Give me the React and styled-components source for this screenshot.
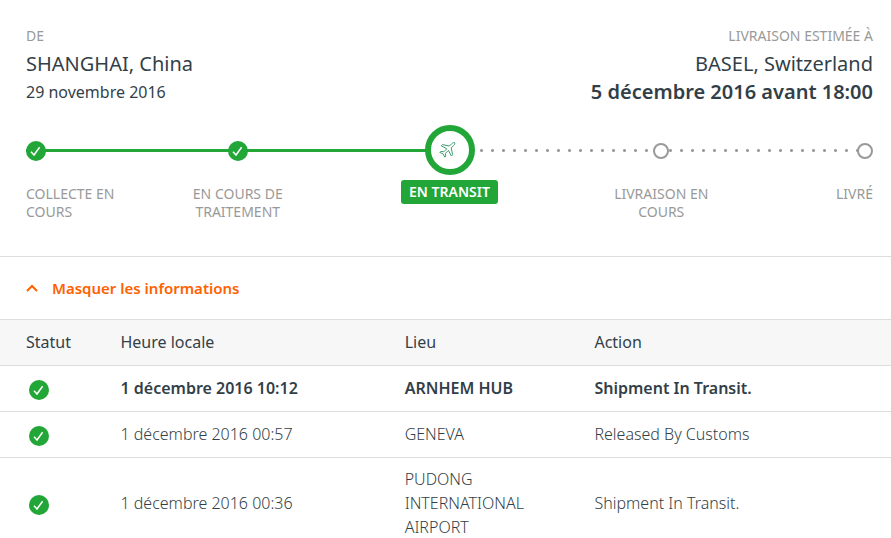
import React, { useState } from 'react'
import styled, { createGlobalStyle } from 'styled-components'

const GlobalStyle = createGlobalStyle`
* { box-sizing: border-box; }
body {
  margin: 0;
  background: #FFFFFF;
  color: #333F48;
  font-family: "Noto Sans", "Open Sans", sans-serif;
  font-size: 16px;
  line-height: 24px;
}
`;

const Summary = styled.section`
padding: 27px 18px 35px 26px;
border-bottom: 1px solid #DDDDDD;
`;

const Route = styled.div`
display: flex;
justify-content: space-between;
margin-bottom: 19px;
`;

const Place = styled.div`
text-align: ${(props) => (props.$right ? "right" : "left")};
`;

const Caption = styled.p`
margin: 0 0 5px;
font-size: 14px;
line-height: 18px;
color: #999999;
`;

const City = styled.p`
margin: 0;
font-size: 20px;
line-height: 28px;
`;

const DateLine = styled.p`
margin: 0;
font-size: ${(props) => (props.$strong ? "20px" : "16px")};
font-weight: ${(props) => (props.$strong ? 600 : 400)};
line-height: 28px;
`;

const Progress = styled.div`
display: grid;
`;

const Track = styled.div`
grid-area: 1 / 1;
display: flex;
padding-top: 24px;
`;

const Line = styled.span`
flex: 1;
height: 3px;
background: ${(props) => (props.$done
    ? "#21A637"
    : "radial-gradient(circle, #999999 1px, transparent 2px) 4px 0 / 11px 3px")};
`;

const Steps = styled.ol`
grid-area: 1 / 1;
display: grid;
grid-template-columns: 1fr 2fr 2fr 2fr 1fr;
margin: 0;
padding: 0;
list-style: none;
`;

const Step = styled.li`
display: flex;
flex-direction: column;
align-items: center;
text-align: center;
&:first-child { align-items: flex-start; text-align: left; }
&:last-child { align-items: flex-end; text-align: right; }
`;

const MarkerBox = styled.div`
display: flex;
align-items: ${(props) => (props.$current ? "flex-start" : "center")};
height: 52px;
`;

const Circle = styled.span`
display: flex;
align-items: center;
justify-content: center;
width: ${(props) => (props.$current ? "50px" : "16px")};
height: ${(props) => (props.$current ? "50px" : "16px")};
border: ${(props) => (props.$current ? "6px solid #21A637" : "2px solid #999999")};
border-radius: 50%;
background: #FFFFFF;
`;

const StepLabel = styled.span`
max-width: 106px;
margin-top: 8px;
font-size: 14px;
line-height: 18px;
color: #999999;
`;

const Badge = styled.strong`
margin-top: 3px;
padding: 3px 8px;
font-size: 14px;
line-height: 18px;
font-weight: 600;
color: #FFFFFF;
background: #21A637;
border-radius: 3px;
`;

const Toggle = styled.button`
display: flex;
align-items: center;
gap: 14px;
width: 100%;
height: 62px;
padding: 0 26px;
border: 0;
background: none;
font: inherit;
font-size: 15px;
font-weight: 600;
color: #FF6200;
cursor: pointer;
`;

const Table = styled.table`
width: 100%;
table-layout: fixed;
border-collapse: collapse;
`;

const Row = styled.tr`
border-top: 1px solid #DDDDDD;
font-weight: ${(props) => (props.$latest ? 600 : 300)};
background: ${(props) => (props.$head ? "#F7F7F7" : "#FFFFFF")};
`;

const HeadCell = styled.th`
width: ${(props) => props.$width};
height: 46px;
padding: 9px 0 10px 26px;
font-weight: 400;
text-align: left;
`;

const Cell = styled.td`
height: 46px;
padding: 9px 0 10px 26px;
`;

const StatusBox = styled.span`
display: flex;
padding: 3px 0 0 3px;
`;

function Check() {
  return (
    <svg width="20" height="20" viewBox="0 0 20 20" aria-hidden="true">
      <circle cx="10" cy="10" r="10" fill="#21A637" />
      <path d="M5 10.8 L8 14 L13.6 6.2" fill="none" stroke="#FFFFFF" strokeWidth="1.5" />
    </svg>
  )
}

function Plane() {
  return (
    <svg width="22" height="16" viewBox="0 0 22 16" fill="none" stroke="#3F9C70" strokeWidth="1" strokeLinejoin="round" aria-hidden="true">
      <path d="M15.8 0.8 C14.6 0.4 13.6 0.8 12.6 1.8 L10.4 4 L3.4 2.6 L2.2 3.8 L7.8 6.8 L4.8 9.8 L1.8 9.4 L0.8 10.4 L4.2 12 L5.8 15.2 L6.8 14.2 L6.4 11.4 L9.4 8.4 L12.4 14 L13.6 12.8 L12.2 5.8 L14.6 3.6 C15.4 2.7 16 1.8 15.8 0.8 Z" />
    </svg>
  )
}

const steps = [
  { label: "COLLECTE EN COURS", state: "done" },
  { label: "EN COURS DE TRAITEMENT", state: "done" },
  { label: "EN TRANSIT", state: "current" },
  { label: "LIVRAISON EN COURS", state: "todo" },
  { label: "LIVRÉ", state: "todo" },
]

const events = [
  { time: "1 décembre 2016 10:12", place: "ARNHEM HUB", action: "Shipment In Transit." },
  { time: "1 décembre 2016 00:57", place: "GENEVA", action: "Released By Customs" },
  { time: "1 décembre 2016 00:36", place: "PUDONG INTERNATIONAL AIRPORT", action: "Shipment In Transit." },
]

export default function App() {
  const [open, setOpen] = useState(true)

  return (
    <main>
      <GlobalStyle />
      <Summary>
        <Route>
          <Place>
            <Caption>DE</Caption>
            <City>SHANGHAI, China</City>
            <DateLine>29 novembre 2016</DateLine>
          </Place>
          <Place $right>
            <Caption>LIVRAISON ESTIMÉE À</Caption>
            <City>BASEL, Switzerland</City>
            <DateLine $strong>5 décembre 2016 avant 18:00</DateLine>
          </Place>
        </Route>
        <Progress>
          <Track>
            <Line $done />
            <Line $done />
            <Line />
            <Line />
          </Track>
          <Steps>
            {steps.map((step) => (
              <Step key={step.label}>
                <MarkerBox $current={step.state === "current"}>
                  {step.state === "done" && <Check />}
                  {step.state === "current" && <Circle $current><Plane /></Circle>}
                  {step.state === "todo" && <Circle />}
                </MarkerBox>
                {step.state === "current"
                  ? <Badge>{step.label}</Badge>
                  : <StepLabel>{step.label}</StepLabel>}
              </Step>
            ))}
          </Steps>
        </Progress>
      </Summary>
      <Toggle type="button" aria-expanded={open} onClick={() => setOpen(!open)}>
        <svg width="12" height="8" viewBox="0 0 12 8" aria-hidden="true">
          <path d="M1 7 L6 2 L11 7" fill="none" stroke="#FF6200" strokeWidth="2" />
        </svg>
        Masquer les informations
      </Toggle>
      {open && (
        <Table>
          <thead>
            <Row $head>
              <HeadCell $width="10.6%">Statut</HeadCell>
              <HeadCell $width="31.9%">Heure locale</HeadCell>
              <HeadCell $width="21.3%">Lieu</HeadCell>
              <HeadCell>Action</HeadCell>
            </Row>
          </thead>
          <tbody>
            {events.map((event, i) => (
              <Row key={event.time} $latest={i === 0}>
                <Cell><StatusBox><Check /></StatusBox></Cell>
                <Cell>{event.time}</Cell>
                <Cell>{event.place}</Cell>
                <Cell>{event.action}</Cell>
              </Row>
            ))}
          </tbody>
        </Table>
      )}
    </main>
  )
}
